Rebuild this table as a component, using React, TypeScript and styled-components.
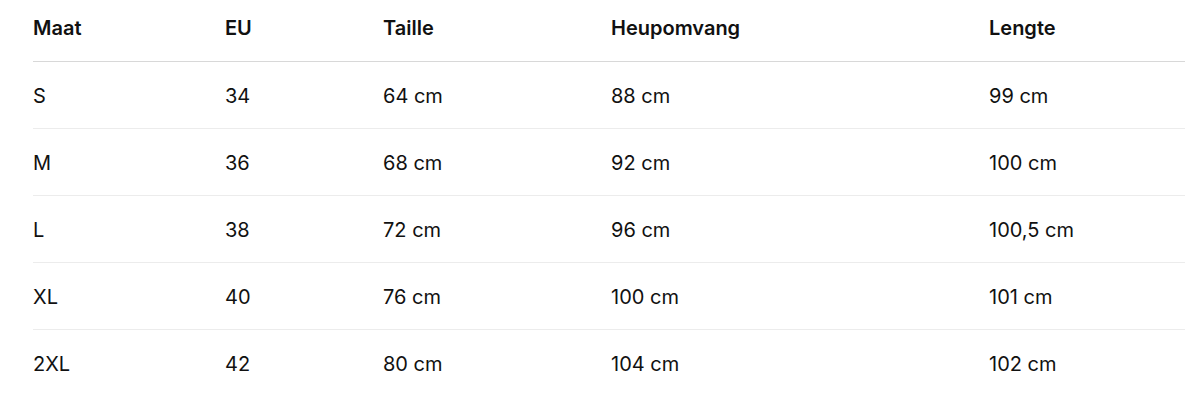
import React from "react";
import styled, { createGlobalStyle } from "styled-components";

const Global = createGlobalStyle`
  html, body { margin: 0; padding: 0; background: #ffffff; }
  body { font-family: Inter, "Noto Sans", "Liberation Sans", sans-serif; color: #111111; }
`;

const Wrap = styled.div`
  padding: 0 13px 0 33px;
`;

const Table = styled.table`
  width: 1152px;
  border-collapse: collapse;
  table-layout: fixed;
`;

const Col = styled.col<{ $w: number }>`
  width: ${(p) => p.$w}px;
`;

const HeadCell = styled.th`
  height: 56px;
  padding: 0 0 5px 0;
  text-align: left;
  font-size: 20px;
  font-weight: 600;
  color: #111111;
  border-bottom: 1px solid #d8d8d8;
`;

const Row = styled.tr<{ $last?: boolean }>`
  border-bottom: ${(p) => (p.$last ? "none" : "1px solid #ececec")};
`;

const Cell = styled.td`
  height: 64px;
  padding: 2px 0 0 0;
  font-size: 20px;
  font-weight: 400;
  color: #111111;
`;

const headers = ["Maat", "EU", "Taille", "Heupomvang", "Lengte"];
const widths = [192, 158, 228, 378, 196];
const rows = [
  ["S", "34", "64 cm", "88 cm", "99 cm"],
  ["M", "36", "68 cm", "92 cm", "100 cm"],
  ["L", "38", "72 cm", "96 cm", "100,5 cm"],
  ["XL", "40", "76 cm", "100 cm", "101 cm"],
  ["2XL", "42", "80 cm", "104 cm", "102 cm"],
];

export default function App() {
  return (
    <Wrap>
      <Global />
      <Table>
        <colgroup>
          {widths.map((w, i) => (
            <Col key={i} $w={w} />
          ))}
        </colgroup>
        <thead>
          <tr>
            {headers.map((h) => (
              <HeadCell key={h}>{h}</HeadCell>
            ))}
          </tr>
        </thead>
        <tbody>
          {rows.map((r, i) => (
            <Row key={r[0]} $last={i === rows.length - 1}>
              {r.map((c, j) => (
                <Cell key={j}>{c}</Cell>
              ))}
            </Row>
          ))}
        </tbody>
      </Table>
    </Wrap>
  );
}
